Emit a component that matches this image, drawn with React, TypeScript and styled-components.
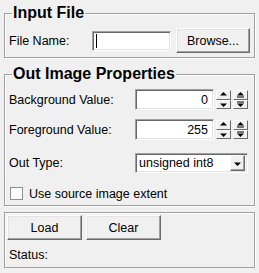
import { createGlobalStyle, styled } from 'styled-components';

const Global = createGlobalStyle`
  html, body {
    margin: 0;
    background: #f0f0f0;
  }
  body {
    font-family: "Liberation Sans", Arial, sans-serif;
    font-size: 12.5px;
    color: #000;
  }
`;

const Arrow = ({ dir, bar }: { dir: 'up' | 'down'; bar?: boolean }) => (
  <svg width="9" height="7" viewBox="0 0 9 7">
    {dir === 'up' ? (
      <>
        <polygon points="4.5,1 8,4.5 1,4.5" fill="#000" />
        {bar && <rect x="1" y="5.5" width="7" height="1" fill="#000" />}
      </>
    ) : (
      <>
        {bar && <rect x="1" y="0.5" width="7" height="1" fill="#000" />}
        <polygon points="1,2.5 8,2.5 4.5,6" fill="#000" />
      </>
    )}
  </svg>
);

const SpinBox = ({ value }: { value: string }) => (
  <St.Spin>
    <St.SpinField>{value}</St.SpinField>
    <St.SpinCol>
      <St.SpinBtn>
        <Arrow dir="up" />
      </St.SpinBtn>
      <St.SpinBtn>
        <Arrow dir="down" />
      </St.SpinBtn>
    </St.SpinCol>
    <St.SpinCol>
      <St.SpinBtn>
        <Arrow dir="up" bar />
      </St.SpinBtn>
      <St.SpinBtn>
        <Arrow dir="down" bar />
      </St.SpinBtn>
    </St.SpinCol>
  </St.Spin>
);

const App = () => {
  return (
    <St.Page>
      <Global />
      <St.Group>
        <St.Legend>Input File</St.Legend>
        <St.Body $top={6} $bottom={4}>
          <St.Row>
            <St.Label $w={79}>File Name:</St.Label>
            <St.Field>
              <St.Caret />
            </St.Field>
            <St.Button $w={74}>Browse...</St.Button>
          </St.Row>
        </St.Body>
      </St.Group>

      <St.Group $mt={7}>
        <St.Legend>Out Image Properties</St.Legend>
        <St.Body $top={6} $bottom={4} $gap={9}>
          <St.Row>
            <St.Label $w={122}>Background Value:</St.Label>
            <SpinBox value="0" />
          </St.Row>
          <St.Row>
            <St.Label $w={122}>Foreground Value:</St.Label>
            <SpinBox value="255" />
          </St.Row>
          <St.Row $mt={4}>
            <St.Label $w={122}>Out Type:</St.Label>
            <St.Combo>
              <span>unsigned int8</span>
              <St.DropBtn>
                <Arrow dir="down" />
              </St.DropBtn>
            </St.Combo>
          </St.Row>
          <St.CheckRow>
            <St.Check />
            <span>Use source image extent</span>
          </St.CheckRow>
        </St.Body>
      </St.Group>

      <St.Group $mt={6}>
        <St.Body $top={2} $bottom={4} $left={2} $gap={7}>
          <St.Row>
            <St.Button $w={75}>Load</St.Button>
            <St.Button $w={75}>Clear</St.Button>
          </St.Row>
          <St.Status>Status:</St.Status>
        </St.Body>
      </St.Group>
    </St.Page>
  );
};

export default App;

const St = {
  Page: styled.div`
    width: 251px;
    padding: 4px 0 0 4px;
  `,
  Group: styled.fieldset<{ $mt?: number }>`
    margin: ${({ $mt }) => $mt ?? 0}px 0 0 0;
    padding: 0;
    min-width: 0;
    border: 1px solid #a0a0a0;
    box-shadow: inset 1px 1px #fff, 1px 1px #fff;
  `,
  Legend: styled.legend`
    margin-left: 7px;
    padding: 0 1px;
    font-weight: bold;
    font-size: 16px;
    line-height: 18px;
  `,
  Body: styled.div<{ $top: number; $bottom: number; $left?: number; $gap?: number }>`
    display: flex;
    flex-direction: column;
    gap: ${({ $gap }) => $gap ?? 0}px;
    padding: ${({ $top, $bottom, $left }) => `${$top}px 4px ${$bottom}px ${$left ?? 4}px`};
  `,
  Row: styled.div<{ $mt?: number }>`
    display: flex;
    align-items: center;
    gap: 4px;
    margin-top: ${({ $mt }) => $mt ?? 0}px;
  `,
  Label: styled.span<{ $w: number }>`
    width: ${({ $w }) => $w}px;
    flex: none;
  `,
  Field: styled.div`
    box-sizing: border-box;
    width: 79px;
    height: 20px;
    margin-right: 1px;
    background: #fff;
    border: 1px solid;
    border-color: #a0a0a0 #fff #fff #a0a0a0;
    box-shadow: inset 1px 1px #696969, inset -1px -1px #e3e3e3;
    display: flex;
    align-items: center;
    padding-left: 3px;
  `,
  Caret: styled.div`
    width: 1px;
    height: 14px;
    background: #000;
  `,
  Button: styled.div<{ $w: number }>`
    box-sizing: border-box;
    width: ${({ $w }) => $w}px;
    height: 25px;
    display: flex;
    align-items: center;
    justify-content: center;
    background: #f0f0f0;
    border: 1px solid;
    border-color: #fff #696969 #696969 #fff;
    box-shadow: inset -1px -1px #a0a0a0, inset 1px 1px #e3e3e3;
  `,
  Spin: styled.div`
    display: flex;
    align-items: center;
    height: 21px;
  `,
  SpinField: styled.div`
    box-sizing: border-box;
    width: 79px;
    height: 21px;
    background: #fff;
    border: 1px solid;
    border-color: #a0a0a0 #fff #fff #a0a0a0;
    box-shadow: inset 1px 1px #696969, inset -1px -1px #e3e3e3;
    display: flex;
    align-items: center;
    justify-content: flex-end;
    padding-right: 5px;
  `,
  SpinCol: styled.div`
    display: flex;
    flex-direction: column;
    width: 15px;
    height: 19px;
    margin-left: 2px;
  `,
  SpinBtn: styled.div`
    box-sizing: border-box;
    flex: 1;
    display: flex;
    align-items: center;
    justify-content: center;
    background: #f0f0f0;
    border: 1px solid;
    border-color: #fff #696969 #696969 #fff;
  `,
  Combo: styled.div`
    box-sizing: border-box;
    width: 113px;
    height: 20px;
    background: #fff;
    border: 1px solid;
    border-color: #a0a0a0 #fff #fff #a0a0a0;
    box-shadow: inset 1px 1px #696969, inset -1px -1px #e3e3e3;
    display: flex;
    align-items: center;
    justify-content: space-between;
    padding: 2px 2px 2px 3px;
  `,
  DropBtn: styled.div`
    box-sizing: border-box;
    width: 15px;
    height: 16px;
    display: flex;
    align-items: center;
    justify-content: center;
    background: #f0f0f0;
    border: 1px solid;
    border-color: #fff #696969 #696969 #fff;
    box-shadow: inset -1px -1px #a0a0a0;
  `,
  CheckRow: styled.div`
    display: flex;
    align-items: center;
    gap: 6px;
    margin-top: 4px;
    padding-left: 1px;
    height: 15px;
  `,
  Check: styled.div`
    box-sizing: border-box;
    width: 13px;
    height: 13px;
    background: #fff;
    border: 1px solid #8e8f8f;
  `,
  Status: styled.div`
    height: 16px;
    line-height: 16px;
    padding-left: 2px;
  `,
};
